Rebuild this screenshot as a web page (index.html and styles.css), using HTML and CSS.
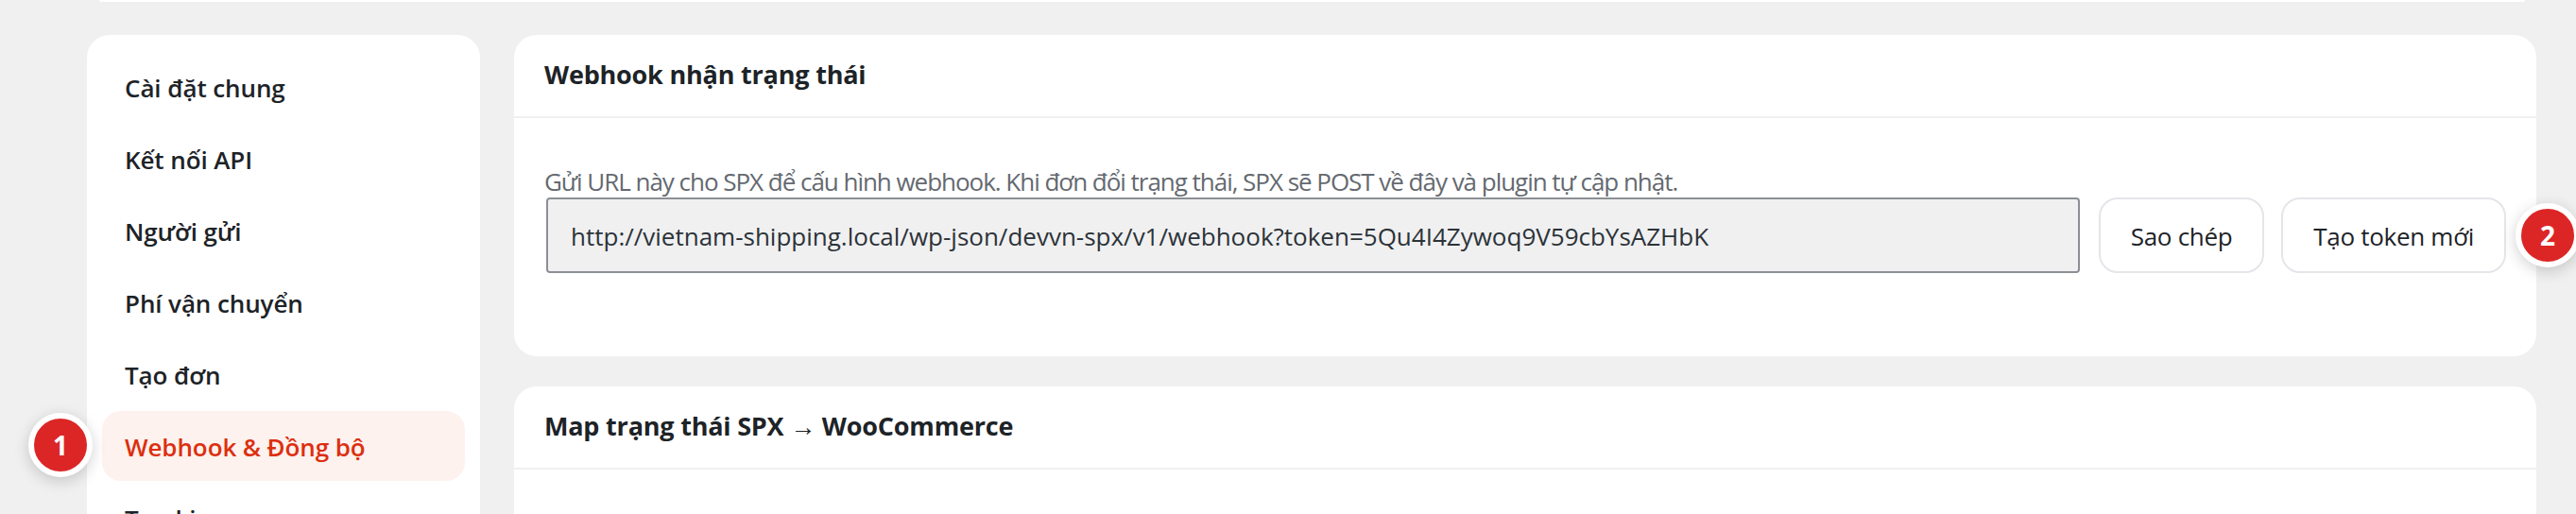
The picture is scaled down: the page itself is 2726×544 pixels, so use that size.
FILE: index.html
```html
<!DOCTYPE html>
<html lang="vi">

<head>
    <meta charset="UTF-8">
    <title>Webhook &amp; Đồng bộ</title>
    <link rel="stylesheet" href="styles.css">
</head>

<body>
    <div class="topbar"></div>
    <div class="layout">
        <nav class="sidebar">
            <a class="nav-item">Cài đặt chung</a>
            <a class="nav-item">Kết nối API</a>
            <a class="nav-item">Người gửi</a>
            <a class="nav-item">Phí vận chuyển</a>
            <a class="nav-item">Tạo đơn</a>
            <a class="nav-item active">Webhook &amp; Đồng bộ
                <span class="badge badge-nav">1</span>
            </a>
            <a class="nav-item">Tracking</a>
        </nav>
        <main class="content">
            <section class="card">
                <h2 class="card-title">Webhook nhận trạng thái</h2>
                <div class="card-body">
                    <p class="hint">Gửi URL này cho SPX để cấu hình webhook. Khi đơn đổi trạng thái, SPX sẽ POST về đây và plugin tự cập nhật.</p>
                    <div class="url-row">
                        <input class="url-input" type="text" readonly value="http://vietnam-shipping.local/wp-json/devvn-spx/v1/webhook?token=5Qu4I4Zywoq9V59cbYsAZHbK">
                        <button class="btn">Sao chép</button>
                        <button class="btn">Tạo token mới</button>
                    </div>
                </div>
                <span class="badge badge-token">2</span>
            </section>
            <section class="card">
                <h2 class="card-title">Map trạng thái SPX → WooCommerce</h2>
                <div class="card-body card-body-tall"></div>
            </section>
        </main>
    </div>
</body>

</html>
```

FILE: styles.css
```css
html, body {
    height: 544px;
    overflow: hidden;
}

body {
    margin: 0;
    background-color: #f0f0f1;
    font-family: "Open Sans", "Noto Sans", sans-serif;
    color: #1d2327;
}

.topbar {
    height: 2px;
    margin: 0 54px 0 105px;
    background-color: #fff;
    border-radius: 0 0 12px 12px;
}

.layout {
    display: flex;
    gap: 36px;
    padding: 35px 42px 0 92px;
}

.sidebar {
    width: 416px;
    flex-shrink: 0;
    display: flex;
    flex-direction: column;
    gap: 2px;
    padding: 18px 16px;
    box-sizing: border-box;
    background-color: #fff;
    border-radius: 24px;
}

.nav-item {
    position: relative;
    display: flex;
    align-items: center;
    height: 74px;
    padding: 2px 24px 0;
    box-sizing: border-box;
    border-radius: 20px;
    font-size: 26px;
    font-weight: 600;
    letter-spacing: -0.1px;
    color: #1d2327;
}

.nav-item.active {
    background-color: #fef2ee;
    color: #dc2f0f;
}

.content {
    flex: 1;
    display: flex;
    flex-direction: column;
    gap: 32px;
}

.card {
    position: relative;
    background-color: #fff;
    border-radius: 24px;
}

.card-title {
    margin: 0;
    height: 86px;
    line-height: 84px;
    padding: 0 32px;
    border-bottom: 2px solid #f0f0f1;
    font-size: 27px;
    font-weight: 700;
    letter-spacing: -0.2px;
}

.card-body {
    padding: 50px 32px 88px;
}

.card-body-tall {
    min-height: 200px;
}

.hint {
    margin: 0;
    height: 34px;
    line-height: 34px;
    font-size: 26px;
    letter-spacing: -1.03px;
    color: #646970;
}

.url-row {
    display: flex;
    align-items: center;
    gap: 18px;
}

.url-input {
    flex: 1;
    min-width: 0;
    height: 80px;
    margin: 0 2px;
    padding: 2px 24px 0;
    box-sizing: border-box;
    border: 2px solid #8c8f94;
    border-radius: 4px;
    background-color: #f0f0f1;
    font-family: inherit;
    font-size: 26px;
    letter-spacing: 0;
    color: #2c3338;
}

.btn {
    height: 80px;
    padding: 2px 32px 0;
    border: 2px solid #e5e5ea;
    border-radius: 20px;
    background-color: #fff;
    font-family: inherit;
    font-size: 26px;
    font-weight: 500;
    letter-spacing: -0.3px;
    color: #1d2327;
}

.badge {
    position: absolute;
    display: flex;
    align-items: center;
    justify-content: center;
    width: 56px;
    height: 56px;
    border: 6px solid #fff;
    border-radius: 50%;
    background-color: #dc2626;
    box-shadow: 0 4px 16px rgba(0, 0, 0, 0.18);
    font-size: 28px;
    font-weight: 700;
    letter-spacing: 0;
    color: #fff;
}

.badge-nav {
    left: -78px;
    top: 2px;
}

.badge-token {
    right: -46px;
    top: 178px;
}
```
